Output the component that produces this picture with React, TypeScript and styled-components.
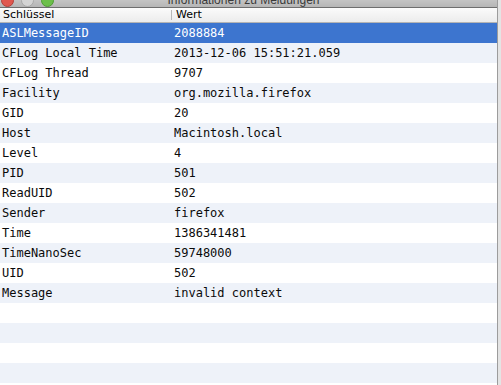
import React from "react";
import styled, { createGlobalStyle } from "styled-components";

const Global = createGlobalStyle`
  html, body { margin: 0; padding: 0; background: #dedede; }
  body { width: 501px; height: 385px; overflow: hidden; }
`;

const Page = styled.div`
  display: flex;
  width: 501px;
  height: 385px;
  overflow: hidden;
`;

const Window = styled.div`
  width: 497px;
  height: 385px;
  display: flex;
  flex-direction: column;
  overflow: hidden;
  border-right: 1px solid #9c9c9c;
  background: #ffffff;
`;

const Backdrop = styled.div`
  flex: 1;
  background: #e4e4e4;
`;

const TitleBar = styled.div`
  height: 7px;
  flex-shrink: 0;
  display: flex;
  align-items: flex-end;
  overflow: hidden;
  background: linear-gradient(#c4c4c4, #b6b6b6);
  border-bottom: 1px solid #6e6e6e;
  position: relative;
`;

const Lights = styled.div`
  display: flex;
  gap: 7px;
  padding-left: 1px;
  margin-bottom: 0px;
`;

const Light = styled.div<{ $c: string; $edge: string }>`
  width: 13px;
  height: 13px;
  border-radius: 50%;
  background: ${(p) => p.$c};
  border: 1px solid ${(p) => p.$edge};
  box-sizing: border-box;
`;

const Title = styled.div`
  position: absolute;
  left: 0;
  right: 0;
  bottom: 0;
  text-align: center;
  font-family: "Liberation Sans", Arial, sans-serif;
  font-size: 12px;
  line-height: 12px;
  color: #3a3a3a;
  margin-bottom: 1px;
  padding-right: 10px;
`;

const Header = styled.div`
  height: 14px;
  flex-shrink: 0;
  display: flex;
  align-items: center;
  background: linear-gradient(#fbfbfb, #ececec);
  border-bottom: 1px solid #b4b4b4;
  font-family: "DejaVu Sans", sans-serif;
  font-size: 11px;
  color: #000;
`;

const HeadCell = styled.div<{ $w?: number; $divider?: boolean }>`
  ${(p) => (p.$w ? `width: ${p.$w}px;` : "flex: 1;")}
  box-sizing: border-box;
  padding-left: ${(p) => (p.$divider ? 4 : 3)}px;
  height: 10px;
  line-height: 10px;
  ${(p) => (p.$divider ? "border-left: 1px solid #b8b8b8;" : "")}
`;

const Rows = styled.div`
  display: flex;
  flex-direction: column;
`;

const Row = styled.div<{ $selected?: boolean; $stripe?: boolean }>`
  height: 20px;
  flex-shrink: 0;
  display: flex;
  align-items: center;
  background: ${(p) => (p.$selected ? "#3d75cf" : p.$stripe ? "#eef2f9" : "#ffffff")};
  color: ${(p) => (p.$selected ? "#ffffff" : "#0a0a0a")};
  font-family: "DejaVu Sans Mono", "Liberation Mono", monospace;
  font-size: 12px;
  white-space: pre;
`;

const KeyCell = styled.div`
  width: 174px;
  box-sizing: border-box;
  padding-left: 2px;
`;

const ValueCell = styled.div`
  flex: 1;
`;

const data: [string, string][] = [
  ["ASLMessageID", "2088884"],
  ["CFLog Local Time", "2013-12-06 15:51:21.059"],
  ["CFLog Thread", "9707"],
  ["Facility", "org.mozilla.firefox"],
  ["GID", "20"],
  ["Host", "Macintosh.local"],
  ["Level", "4"],
  ["PID", "501"],
  ["ReadUID", "502"],
  ["Sender", "firefox"],
  ["Time", "1386341481"],
  ["TimeNanoSec", "59748000"],
  ["UID", "502"],
  ["Message", "invalid context"],
];

export default function App() {
  const empty = Array.from({ length: 6 });
  return (
    <Page>
      <Global />
      <Window>
        <TitleBar>
          <Lights>
            <Light $c="#e0584f" $edge="#b0403a" />
            <Light $c="#d4d4d4" $edge="#a8a8a8" />
            <Light $c="#6cbf4a" $edge="#4f9a35" />
          </Lights>
          <Title>Informationen zu Meldungen</Title>
        </TitleBar>
        <Header>
          <HeadCell $w={171}>Schlüssel</HeadCell>
          <HeadCell $divider>Wert</HeadCell>
        </Header>
        <Rows>
          {data.map(([k, v], i) => (
            <Row key={k} $selected={i === 0} $stripe={i % 2 === 1}>
              <KeyCell>{k}</KeyCell>
              <ValueCell>{v}</ValueCell>
            </Row>
          ))}
          {empty.map((_, j) => (
            <Row key={"e" + j} $stripe={(data.length + j) % 2 === 1} />
          ))}
        </Rows>
      </Window>
      <Backdrop />
    </Page>
  );
}
